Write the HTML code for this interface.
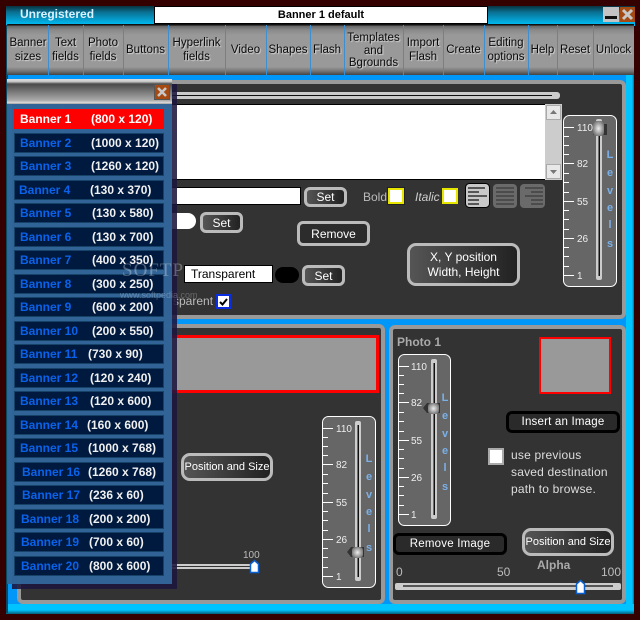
<!DOCTYPE html>
<html><head><meta charset="utf-8">
<style>
html,body{margin:0;padding:0}
body{width:640px;height:620px;overflow:hidden;position:relative;background:#350000;font-family:"Liberation Sans",sans-serif}
.a,.a *{box-sizing:border-box}
.a{position:absolute;white-space:nowrap}
.nav{position:absolute;top:25px;height:50px;border-right:1px solid #3d8fcf;display:flex;align-items:center;justify-content:center;text-align:center;font-size:11.5px;line-height:14px;color:#0a0a0a;text-shadow:1px 1px 1px rgba(255,255,255,.65)}
.panel{position:absolute;background:#333;border:4px solid #999;border-radius:6px;box-sizing:border-box}
.btn{position:absolute;box-sizing:border-box;background:linear-gradient(90deg,#555,#222);border:3px solid #bbb;border-radius:6px;color:#fff;font-size:12px;display:flex;align-items:center;justify-content:center;text-align:center}
.big{border-radius:9px}
.blk{position:absolute;box-sizing:border-box;background:#2a2a2a;border:3px solid #000;border-radius:6px;color:#fff;font-size:11.5px;display:flex;align-items:center;justify-content:center;letter-spacing:.2px}
.t{position:absolute;white-space:nowrap}
.row{position:absolute;left:14px;width:150px;height:20px;background:#001a3f;border:1px solid #174268;box-sizing:border-box;font-size:12px;font-weight:bold;line-height:18px}
.row span{position:absolute;top:0}
.row .n{color:#0a62ea}
.row .s{color:#f0f0f0}
svg text{font-family:"Liberation Sans",sans-serif}
.lv{position:absolute;width:55px;height:173px}
.tk{shape-rendering:crispEdges}
</style></head><body>

<svg width="0" height="0" style="position:absolute"><defs><radialGradient id="th" cx=".5" cy=".5" r=".6"><stop offset="0" stop-color="#eee"/><stop offset="1" stop-color="#666"/></radialGradient></defs></svg>

<!-- frame -->
<div class="a" style="left:6px;top:6px;width:629px;height:20px;background:linear-gradient(180deg,#08323f 0,#0a6f90 30%,#00c4ff 100%)"></div>
<div class="a" style="left:6px;top:25px;width:628px;height:588px;background:#0097f8"></div>
<div class="a" style="left:626px;top:25px;width:8px;height:588px;background:linear-gradient(90deg,#00c4ff 75%,#0a6f90)"></div>
<div class="a" style="left:6px;top:604px;width:628px;height:10px;background:linear-gradient(180deg,#00c4ff 60%,#075e78)"></div>
<div class="a" style="left:6px;top:25px;width:2px;height:588px;background:#0a4a60"></div>

<!-- top bar -->
<div class="t" style="left:20px;top:7px;font-size:12px;font-weight:bold;color:#d8f2ff;line-height:14px">Unregistered</div>
<div class="a" style="left:154px;top:6px;width:334px;height:18px;background:#fff;border:1px solid #000;font-size:11px;font-weight:bold;text-align:center;line-height:17px;color:#000">Banner 1 default</div>
<div class="a" style="left:603px;top:7px;width:16px;height:15px;background:#c4c4c4"><div class="a" style="left:2px;top:9px;width:12px;height:3px;background:#111"></div></div>
<div class="a" style="left:620px;top:7px;width:15px;height:15px;background:#a64a14"><svg width="15" height="15" style="display:block"><path d="M3 3L12 12M12 3L3 12" stroke="#c8c8c8" stroke-width="3"/></svg></div>

<!-- nav -->
<div class="a" style="left:7px;top:24px;width:627px;height:51px;background:linear-gradient(180deg,#111 0,#111 2%,#666 4%,#8a8a8a 12%,#999 22%,#999 84%,#777 92%,#444 100%)"></div>
<div class="nav" style="left:8px;width:40px">Banner<br>sizes</div>
<div class="nav" style="left:48px;width:35px">Text<br>fields</div>
<div class="nav" style="left:83px;width:40px">Photo<br>fields</div>
<div class="nav" style="left:123px;width:45px">Buttons</div>
<div class="nav" style="left:168px;width:57px">Hyperlink<br>fields</div>
<div class="nav" style="left:225px;width:41px">Video</div>
<div class="nav" style="left:266px;width:44px">Shapes</div>
<div class="nav" style="left:310px;width:34px">Flash</div>
<div class="nav" style="left:344px;width:59px;line-height:12.500px;padding-top:1px">Templates<br>and<br>Bgrounds</div>
<div class="nav" style="left:403px;width:40px">Import<br>Flash</div>
<div class="nav" style="left:443px;width:41px">Create</div>
<div class="nav" style="left:484px;width:44px">Editing<br>options</div>
<div class="nav" style="left:528px;width:29px">Help</div>
<div class="nav" style="left:557px;width:36px">Reset</div>
<div class="nav" style="left:593px;width:41px;border-right:0">Unlock</div>

<!-- main panel -->
<div class="panel" style="left:60px;top:80px;width:566px;height:239px"></div>
<div class="a" style="left:172px;top:92px;width:388px;height:7px;background:#ccc;border-radius:0 3px 3px 0"><div class="a" style="left:0;top:3px;width:380px;height:1px;background:#111"></div></div>
<div class="a" style="left:172px;top:104px;width:374px;height:76px;background:#fff;border:1px solid #000;border-left:0"></div>
<div class="a" style="left:545px;top:104px;width:17px;height:76px;background:#ccc"></div>
<div class="a" style="left:546px;top:105px;width:15px;height:15px;background:#e8e8e8;border:1px solid #aaa"><svg width="13" height="13" style="display:block"><path d="M3 8L10 8L6.500 4Z" fill="#777"/></svg></div>
<div class="a" style="left:546px;top:164px;width:15px;height:15px;background:#e8e8e8;border:1px solid #aaa"><svg width="13" height="13" style="display:block"><path d="M3 5L10 5L6.500 9Z" fill="#777"/></svg></div>

<div class="a" style="left:172px;top:187px;width:129px;height:18px;background:#fff;border:1px solid #000;border-left:0"></div>
<div class="btn" style="left:304px;top:187px;width:43px;height:20px">Set</div>
<div class="t" style="left:363px;top:190px;font-size:12px;color:#bbb;line-height:14px">Bold</div>
<div class="a" style="left:388px;top:188px;width:16px;height:16px;background:#fff;border:2px solid #e6e600;outline:1px solid #222"></div>
<div class="t" style="left:415px;top:190px;font-size:12px;font-style:italic;color:#ccc;line-height:14px">Italic</div>
<div class="a" style="left:442px;top:188px;width:16px;height:16px;background:#fff;border:2px solid #e6e600"></div>

<svg class="a" style="left:465px;top:183px" width="82" height="26">
<rect x=".5" y=".5" width="24" height="24" rx="4" fill="#c8c8c8" stroke="#000"/>
<path d="M3 5H20M3 9H14M3 13H22M3 17H14M3 21H14" stroke="#111" stroke-width="1.300"/>
<rect x="28" y="1" width="24" height="24" rx="4" fill="#6a6a6a"/>
<path d="M31 5H49M31 9H49M31 13H49M31 17H49M31 21H49" stroke="#3a3a3a" stroke-width="1.300"/>
<rect x="55" y="1" width="25" height="24" rx="4" fill="#6a6a6a"/>
<path d="M60 5H78M66 9H78M60 13H78M66 17H78M66 21H78" stroke="#3a3a3a" stroke-width="1.300"/>
</svg>

<div class="a" style="left:172px;top:213px;width:24px;height:16px;background:#fff;border-radius:0 8px 8px 0"></div>
<div class="btn" style="left:200px;top:212px;width:43px;height:21px">Set</div>
<div class="btn" style="left:297px;top:221px;width:73px;height:25px;background:#2c2c2c">Remove</div>
<div class="btn big" style="left:407px;top:243px;width:113px;height:43px;line-height:15px">X, Y position<br>Width, Height</div>

<div class="a" style="left:184px;top:265px;width:89px;height:18px;background:#fff;border:1px solid #000;font-size:12px;line-height:17px;padding-left:6px;color:#000">Transparent</div>
<div class="a" style="left:275px;top:267px;width:24px;height:16px;background:#000;border-radius:8px"></div>
<div class="btn" style="left:302px;top:265px;width:43px;height:21px">Set</div>
<div class="t" style="left:173px;top:294px;font-size:12px;color:#bbb;line-height:14px">sparent</div>
<div class="a" style="left:216px;top:294px;width:15px;height:15px;background:#fff;border:2px solid #0a2ee0"><svg width="11" height="11" style="display:block"><path d="M2 6L4.500 8.500L9 3" stroke="#000" stroke-width="2" fill="none"/></svg></div>

<!-- levels top -->
<svg class="lv" style="left:563px;top:115px" width="55" height="173" viewBox="0 0 55 173">
<rect x=".5" y=".5" width="53" height="171" rx="6" fill="#666" stroke="#fff"/>
<path class="tk" d="M1 12.500H11M1 21.500H6M1 30.500H6M1 39.500H6M1 48.500H11M1 58.500H6M1 67.500H6M1 77.500H6M1 86.500H11M1 95.500H6M1 104.500H6M1 114.500H6M1 123.500H11M1 132.500H6M1 141.500H6M1 151.500H6M1 160.500H11" stroke="#fff"/>
<g fill="#eee" font-size="10"><text x="14" y="16">110</text><text x="14" y="52">82</text><text x="14" y="90">55</text><text x="14" y="127">26</text><text x="14" y="164">1</text></g>
<rect x="33" y="4" width="6" height="161" rx="2" fill="#ccc"/><rect x="35.500" y="8" width="1.500" height="153" fill="#111"/>
<g fill="#7ab0e8" font-size="11" font-weight="bold" text-anchor="middle"><text x="47" y="43">L</text><text x="47" y="61">e</text><text x="47" y="79">v</text><text x="47" y="96">e</text><text x="47" y="113">l</text><text x="47" y="132">s</text></g>
<rect x="30" y="9" width="14" height="11" fill="#333"/><rect x="30" y="6" width="11" height="15" rx="3" fill="url(#th)"/>
</svg>

<!-- lower left panel -->
<div class="panel" style="left:17px;top:324px;width:368px;height:280px"></div>
<div class="a" style="left:170px;top:335px;width:209px;height:58px;background:#999;border:3px solid #f00;border-left:0"></div>
<div class="btn big" style="left:181px;top:453px;width:92px;height:28px;font-size:11px">Position and Size</div>
<div class="a" style="left:170px;top:564px;width:82px;height:5px;background:#ccc"><div class="a" style="left:0;top:2px;width:82px;height:1px;background:#333"></div></div>
<div class="t" style="left:243px;top:550px;font-size:10px;color:#bbb;line-height:12px">100</div>
<svg class="a" style="left:249px;top:559px" width="11" height="15"><path d="M1.500 13.500V5L5.500 1.500L9.500 5V13.500Z" fill="#fff" stroke="#0a60d0" stroke-width="1.500"/></svg>

<svg class="lv" style="left:322px;top:416px" width="55" height="173" viewBox="0 0 55 173">
<rect x=".5" y=".5" width="53" height="171" rx="6" fill="#666" stroke="#fff"/>
<path class="tk" d="M1 12.500H11M1 21.500H6M1 30.500H6M1 39.500H6M1 48.500H11M1 58.500H6M1 67.500H6M1 77.500H6M1 86.500H11M1 95.500H6M1 104.500H6M1 114.500H6M1 123.500H11M1 132.500H6M1 141.500H6M1 151.500H6M1 160.500H11" stroke="#fff"/>
<g fill="#eee" font-size="10"><text x="14" y="16">110</text><text x="14" y="52">82</text><text x="14" y="90">55</text><text x="14" y="127">26</text><text x="14" y="164">1</text></g>
<rect x="33" y="5" width="6" height="160" rx="2" fill="#ccc"/><rect x="35.500" y="9" width="1.500" height="152" fill="#111"/>
<g fill="#7ab0e8" font-size="11" font-weight="bold" text-anchor="middle"><text x="47" y="46">L</text><text x="47" y="64">e</text><text x="47" y="82">v</text><text x="47" y="99">e</text><text x="47" y="116">l</text><text x="47" y="135">s</text></g>
<path d="M25 136L29 131H42V141H29Z" fill="#333"/><rect x="30" y="131" width="11" height="11" rx="3" fill="url(#th)"/>
</svg>

<!-- photo panel -->
<div class="panel" style="left:389px;top:325px;width:237px;height:279px"></div>
<div class="t" style="left:397px;top:335px;font-size:12px;font-weight:bold;color:#aaa;line-height:14px">Photo 1</div>
<div class="a" style="left:539px;top:337px;width:72px;height:57px;background:#999;border:2px solid #f00"></div>
<svg class="lv" style="left:398px;top:354px" width="55" height="173" viewBox="0 0 55 173">
<rect x=".5" y=".5" width="52" height="171" rx="6" fill="#666" stroke="#fff"/>
<path class="tk" d="M1 12.500H11M1 21.500H6M1 30.500H6M1 39.500H6M1 48.500H11M1 58.500H6M1 67.500H6M1 77.500H6M1 86.500H11M1 95.500H6M1 104.500H6M1 114.500H6M1 123.500H11M1 132.500H6M1 141.500H6M1 151.500H6M1 160.500H11" stroke="#fff"/>
<g fill="#eee" font-size="10"><text x="13" y="16">110</text><text x="13" y="52">82</text><text x="13" y="90">55</text><text x="13" y="127">26</text><text x="13" y="164">1</text></g>
<rect x="33" y="5" width="6" height="160" rx="2" fill="#ccc"/><rect x="35.500" y="9" width="1.500" height="152" fill="#111"/>
<g fill="#7ab0e8" font-size="11" font-weight="bold" text-anchor="middle"><text x="47" y="47">L</text><text x="47" y="65">e</text><text x="47" y="83">v</text><text x="47" y="100">e</text><text x="47" y="117">l</text><text x="47" y="136">s</text></g>
<path d="M25 54L29 49H42V59H29Z" fill="#333"/><rect x="30" y="49" width="11" height="11" rx="3" fill="url(#th)"/>
</svg>
<div class="blk" style="left:506px;top:411px;width:114px;height:22px">Insert an Image</div>
<div class="a" style="left:488px;top:448px;width:16px;height:17px;background:#fff;border:2px solid #aaa"></div>
<div class="t" style="left:511px;top:447px;font-size:12px;color:#ddd;line-height:17px;letter-spacing:.2px">use previous<br>saved destination<br>path to browse.</div>
<div class="blk" style="left:393px;top:533px;width:114px;height:22px">Remove Image</div>
<div class="btn big" style="left:522px;top:528px;width:92px;height:28px;font-size:11px">Position and Size</div>
<div class="t" style="left:537px;top:559px;font-size:12px;font-weight:bold;color:#aaa;line-height:13px">Alpha</div>
<div class="t" style="left:396px;top:566px;font-size:12px;color:#bbb;line-height:13px">0</div>
<div class="t" style="left:497px;top:566px;font-size:12px;color:#bbb;line-height:13px">50</div>
<div class="t" style="left:601px;top:566px;font-size:12px;color:#bbb;line-height:13px">100</div>
<div class="a" style="left:395px;top:583px;width:226px;height:7px;background:#ccc;border-radius:2px"><div class="a" style="left:8px;top:2px;width:210px;height:2px;background:#555"></div></div>
<svg class="a" style="left:575px;top:579px" width="11" height="16"><path d="M1.500 14.500V5L5.500 1.500L9.500 5V14.500Z" fill="#fff" stroke="#0a60d0" stroke-width="1.500"/></svg>

<!-- menu -->
<div class="a" style="left:12px;top:84px;width:165px;height:505px;background:rgba(28,22,60,.88)"></div>
<div class="a" style="left:7px;top:79px;width:165px;height:505px;background:rgba(51,102,153,.97)"></div>
<div class="a" style="left:7px;top:79px;width:165px;height:25px;background:linear-gradient(180deg,#ddd 0,#ccc 10%,#4a4a4a 20%,#777 50%,#aaa 85%,#ddd 96%,#888 100%)"></div>
<div class="a" style="left:154px;top:84px;width:16px;height:16px;background:#a64a14;border:1px solid #555"><svg width="14" height="14" style="display:block"><path d="M3 3L11 11M11 3L3 11" stroke="#c8c8c8" stroke-width="2.500"/></svg></div>

<div class="row" style="top:109px;background:#f00;border-color:#f00"><span class="s" style="left:5px;color:#fff">Banner 1</span><span class="s" style="left:76px;color:#fff">(800 x 120)</span></div>
<div class="row" style="top:132.500px"><span class="n" style="left:5px">Banner 2</span><span class="s" style="left:76px">(1000 x 120)</span></div>
<div class="row" style="top:156px"><span class="n" style="left:5px">Banner 3</span><span class="s" style="left:76px">(1260 x 120)</span></div>
<div class="row" style="top:179.500px"><span class="n" style="left:4px">Banner 4</span><span class="s" style="left:75px">(130 x 370)</span></div>
<div class="row" style="top:203px"><span class="n" style="left:5px">Banner 5</span><span class="s" style="left:77px">(130 x 580)</span></div>
<div class="row" style="top:226.500px"><span class="n" style="left:5px">Banner 6</span><span class="s" style="left:77px">(130 x 700)</span></div>
<div class="row" style="top:250px"><span class="n" style="left:5px">Banner 7</span><span class="s" style="left:77px">(400 x 350)</span></div>
<div class="row" style="top:273.500px"><span class="n" style="left:5px">Banner 8</span><span class="s" style="left:77px">(300 x 250)</span></div>
<div class="row" style="top:297px"><span class="n" style="left:5px">Banner 9</span><span class="s" style="left:77px">(600 x 200)</span></div>
<div class="row" style="top:320.500px"><span class="n" style="left:5px">Banner 10</span><span class="s" style="left:77px">(200 x 550)</span></div>
<div class="row" style="top:344px"><span class="n" style="left:5px">Banner 11</span><span class="s" style="left:73px">(730 x 90)</span></div>
<div class="row" style="top:367.500px"><span class="n" style="left:5px">Banner 12</span><span class="s" style="left:75px">(120 x 240)</span></div>
<div class="row" style="top:391px"><span class="n" style="left:5px">Banner 13</span><span class="s" style="left:75px">(120 x 600)</span></div>
<div class="row" style="top:414.500px"><span class="n" style="left:5px">Banner 14</span><span class="s" style="left:72px">(160 x 600)</span></div>
<div class="row" style="top:438px"><span class="n" style="left:5px">Banner 15</span><span class="s" style="left:73px">(1000 x 768)</span></div>
<div class="row" style="top:461.500px"><span class="n" style="left:7px">Banner 16</span><span class="s" style="left:73px">(1260 x 768)</span></div>
<div class="row" style="top:485px"><span class="n" style="left:7px">Banner 17</span><span class="s" style="left:74px">(236 x 60)</span></div>
<div class="row" style="top:508.500px"><span class="n" style="left:6px">Banner 18</span><span class="s" style="left:74px">(200 x 200)</span></div>
<div class="row" style="top:532px"><span class="n" style="left:6px">Banner 19</span><span class="s" style="left:74px">(700 x 60)</span></div>
<div class="row" style="top:555.500px"><span class="n" style="left:6px">Banner 20</span><span class="s" style="left:74px">(800 x 600)</span></div>

<!-- watermark -->
<div class="a" style="left:122px;top:260px;width:62px;height:24px;overflow:hidden;font-family:'Liberation Serif',serif;font-size:19px;line-height:22px;letter-spacing:1px;color:rgba(255,255,255,.3)">SOFTPEDIA</div>
<div class="t" style="left:120px;top:290px;font-size:9px;line-height:11px;color:rgba(255,255,255,.25)">www.softpedia.com</div>

</body></html>
